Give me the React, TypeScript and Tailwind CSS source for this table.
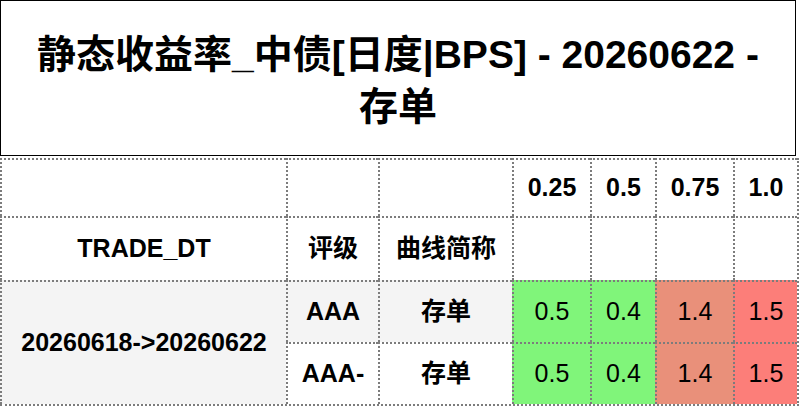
import React from 'react';

const cell = 'flex items-center justify-center border-l-2 border-t-2 border-dotted border-[#7c7c7c]';

const headTenors = ['0.25', '0.5', '0.75', '1.0'];

const rows = [
    { rating: 'AAA', curve: '存单', bg: 'bg-[#f4f4f4]', values: ['0.5', '0.4', '1.4', '1.5'] },
    { rating: 'AAA-', curve: '存单', bg: 'bg-white', values: ['0.5', '0.4', '1.4', '1.5'] },
];

const valueBg = ['bg-[#80f57a]', 'bg-[#80f57a]', 'bg-[#e9907a]', 'bg-[#fc7e79]'];

const App: React.FC = () => {
    return (
        <div className="w-[800px] h-[408px] bg-white text-black font-['Liberation_Sans','Noto_Sans_CJK_SC',sans-serif]">
            {/* Title */}
            <div className="w-[796px] h-[156px] border border-black flex items-center justify-center text-center">
                <h1 className="text-[39px] leading-[52px] font-bold pt-[6px]">
                    静态收益率_中债[日度|BPS] - 20260622 -
                    <br />
                    存单
                </h1>
            </div>

            {/* Table */}
            <div className="mt-[2px] w-[799px] grid grid-cols-[286px_92px_134px_78px_65px_78px_64px] grid-rows-[58px_64px_62px_62px] border-r-2 border-b-2 border-dotted border-[#7c7c7c] text-[25px]">
                {/* header row 1 */}
                <div className={cell}></div>
                <div className={cell}></div>
                <div className={cell}></div>
                {headTenors.map((t) => (
                    <div key={t} className={`${cell} font-bold`}>{t}</div>
                ))}

                {/* header row 2 */}
                <div className={`${cell} font-bold`}>TRADE_DT</div>
                <div className={`${cell} font-bold`}>评级</div>
                <div className={`${cell} font-bold`}>曲线简称</div>
                {headTenors.map((t) => (
                    <div key={'e' + t} className={cell}></div>
                ))}

                {/* data */}
                <div className={`${cell} row-span-2 bg-[#f4f4f4] font-bold`}>20260618-&gt;20260622</div>
                {rows.map((r, i) => (
                    <React.Fragment key={i}>
                        <div className={`${cell} ${r.bg} font-bold`}>{r.rating}</div>
                        <div className={`${cell} ${r.bg} font-bold`}>{r.curve}</div>
                        {r.values.map((v, j) => (
                            <div key={j} className={`${cell} ${valueBg[j]} text-[25px]`}>{v}</div>
                        ))}
                    </React.Fragment>
                ))}
            </div>
        </div>
    );
};

export default App;
